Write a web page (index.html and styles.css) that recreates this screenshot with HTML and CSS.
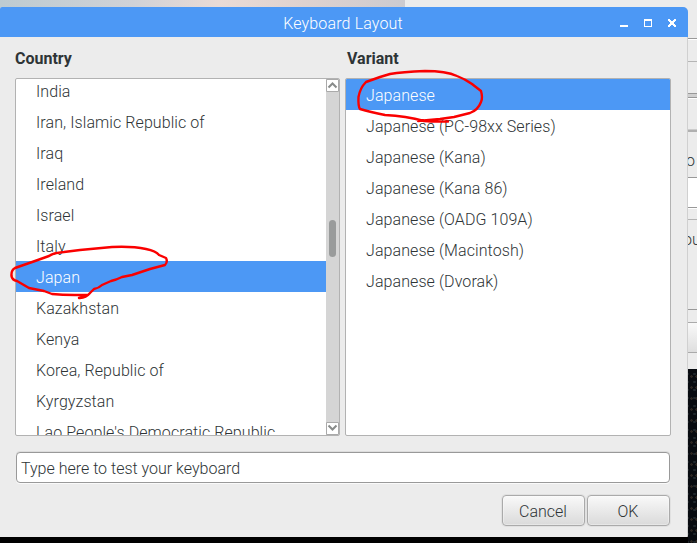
FILE: index.html
```html
<!DOCTYPE html>
<html lang="en">
<head>
<meta charset="utf-8">
<title>Keyboard Layout</title>
<link rel="stylesheet" href="styles.css">
</head>
<body>
<div class="desktop">
  <div class="sky"></div>
  <div class="back-window">
    <div class="back-top"></div>
    <div class="back-tabs"></div>
    <div class="back-panel"></div>
    <div class="back-slider"></div>
    <div class="back-gap"></div>
    <div class="back-label">o</div>
    <div class="back-entry"></div>
    <div class="back-space"></div>
    <div class="back-frame">ou</div>
    <div class="back-button"></div>
  </div>
  <div class="dialog">
    <header class="titlebar">
      <h1>Keyboard Layout</h1>
      <svg class="controls" width="56" height="10" viewBox="0 0 56 10" shape-rendering="crispEdges">
        <path d="M0 6h8v2H0z" fill="#fff"/>
        <path d="M24 0h8v8h-8zM25 2v5h6V2z" fill="#fff" fill-rule="evenodd"/>
        <path d="M48 0h2v1h1v1h2V1h1V0h2v2h-1v1h-1v2h1v1h1v2h-2V7h-1V6h-2v1h-1v1h-2V6h1V5h1V3h-1V2h-1z" fill="#fff"/>
      </svg>
    </header>
    <main class="content">
      <div class="columns">
        <section class="column">
          <h2>Country</h2>
          <div class="list">
            <ul class="rows scrolled">
              <li>India</li>
              <li>Iran, Islamic Republic of</li>
              <li>Iraq</li>
              <li>Ireland</li>
              <li>Israel</li>
              <li>Italy</li>
              <li class="selected">Japan</li>
              <li>Kazakhstan</li>
              <li>Kenya</li>
              <li>Korea, Republic of</li>
              <li>Kyrgyzstan</li>
              <li>Lao People's Democratic Republic</li>
            </ul>
            <div class="scrollbar">
              <svg class="arrow" width="13" height="13" viewBox="0 0 13 13"><path d="M.5.5h12v12H.5z" fill="#fff" stroke="#aaa"/><path d="M2.5 8.5l4-4 4 4" fill="none" stroke="#888b8a" stroke-width="2"/></svg>
              <div class="trough"><div class="thumb"></div></div>
              <svg class="arrow" width="13" height="13" viewBox="0 0 13 13"><path d="M.5.5h12v12H.5z" fill="#fff" stroke="#aaa"/><path d="M2.5 3.5l4 4 4-4" fill="none" stroke="#888b8a" stroke-width="2"/></svg>
            </div>
          </div>
        </section>
        <section class="column">
          <h2 class="inset">Variant</h2>
          <div class="list">
            <ul class="rows">
              <li class="selected">Japanese</li>
              <li>Japanese (PC-98xx Series)</li>
              <li>Japanese (Kana)</li>
              <li>Japanese (Kana 86)</li>
              <li>Japanese (OADG 109A)</li>
              <li>Japanese (Macintosh)</li>
              <li>Japanese (Dvorak)</li>
            </ul>
          </div>
        </section>
      </div>
      <div class="entry">Type here to test your keyboard</div>
      <div class="actions">
        <button type="button">Cancel</button>
        <button type="button">OK</button>
      </div>
    </main>
  </div>
  <svg class="marks" width="697" height="543" viewBox="0 0 697 543">
    <path d="M83 297L79 298M80 298Q86 298 90 293L94 289Q99 288 102 285L111 281Q116 280 122 277L132 275L150 269L165 265Q168 262 166 258L159 255Q156 251 146 249Q132 246 112 247L80 250L64 252Q53 253 49 256L35 261L15 268Q11 270 11.500 276Q12 280 17 281L29 288L44 291L52 294Q62 295 75 295L88 295"/>
    <path d="M448 121.500Q435 122 424 121Q406 116 385 115Q370 112 360 109Q358 106 358.500 97Q360 88 366 82L380 77L390 74Q402 72 425 71Q446 71 457 76Q465 79 472 84L481 91Q483 98 481 102Q478 110 470 113L454 117L440 119L418 121"/>
  </svg>
</div>
</body>
</html>
```
FILE: styles.css
```css
* { box-sizing: border-box; }

body {
  margin: 0;
  font-family: Roboto, "Liberation Sans", sans-serif;
  font-size: 16px;
  font-weight: 300;
  color: #2e3436;
}

.desktop {
  position: relative;
  width: 697px;
  height: 543px;
  overflow: hidden;
  background: #000;
}

.sky {
  position: absolute;
  left: 0;
  top: 0;
  width: 405px;
  height: 12px;
  background: linear-gradient(90deg, #bdcbd1, #d0d2d7 33%, #eadbd6 54%, #dfd2cf 75%, #cccbd0);
}

.back-window {
  position: absolute;
  left: 405px;
  top: 0;
  width: 292px;
  height: 369px;
  background: #ececec;
  line-height: 30px;
}
.back-window > div { padding-left: 281px; overflow: hidden; white-space: nowrap; }
.back-top { height: 38px; }
.back-tabs { height: 24px; border-top: 1px solid #999; border-bottom: 1px solid #b5b5b5; box-shadow: inset 0 1px #fff; }
.back-panel { height: 31px; }
.back-slider { height: 5px; background: #d0d0d0; border: solid #999; border-width: 1px 0; }
.back-gap { height: 34px; border-top: 1px solid #fff; border-bottom: 2px solid #b0b0b0; box-shadow: inset 0 -1px #ccc; }
.back-label { height: 45px; line-height: 58px; }
.back-entry { height: 31px; background: #fff; border: solid #999; border-width: 1px 0; }
.back-space { height: 11px; border-top: 1px solid #fff; }
.back-window .back-frame { height: 91px; padding-left: 278px; border-top: 1px solid #b5b5b5; border-bottom: 1px solid #999; line-height: 40px; }
.back-button { height: 31px; margin-top: 12px; border: solid #aaa; border-width: 1px 0; background: linear-gradient(#f9f9f9, #dedede); }

.desktop::before {
  content: "";
  position: absolute;
  right: 0;
  bottom: 0;
  width: 9px;
  height: 174px;
  background:
    radial-gradient(circle, #2b2521 0 1px, transparent 1.500px) 1px 2px / 5px 11px,
    radial-gradient(circle, #20272c 0 1px, transparent 1.500px) 3px 1px / 7px 8px,
    #080b10;
}

.dialog {
  position: absolute;
  left: 0;
  top: 7px;
  width: 688px;
  height: 530px;
  background: #ececec;
  border-right: 1px solid #d0d0d0;
  border-radius: 2px 5px 1px 0;
}

.titlebar {
  display: flex;
  align-items: center;
  justify-content: center;
  position: relative;
  width: 688px;
  height: 30px;
  background: #4c98f5;
  border-radius: 2px 5px 0 0;
  color: #fff;
}
h1 { margin: 3px 0 0 -2px; font-size: 16px; font-weight: 300; line-height: 20px; letter-spacing: .14px; }
.controls { position: absolute; left: 620px; top: 12px; }

.content { padding: 10px 16px 0 15px; }
.columns { display: grid; grid-template-columns: 325px 326px; gap: 5px; }
h2 { margin: 0 0 7px; font-size: 16px; line-height: 24px; font-weight: 700; }
.inset { padding-left: 2px; }

.list {
  display: flex;
  height: 358px;
  background: #fff;
  border: 1px solid #b2b2b2;
  border-radius: 2px;
  overflow: hidden;
}
.rows { flex: 1; min-width: 0; margin: 0; padding: 0; list-style: none; letter-spacing: .08px; }
.scrolled { margin-top: -4px; }
.rows li { height: 31px; padding-left: 20px; line-height: 33px; white-space: nowrap; }
.rows .selected { background: #4c98f5; color: #fff; }

.scrollbar { display: flex; flex-direction: column; width: 13px; background: #d5d5d5; }
.arrow { display: block; flex: none; }
.trough { flex: 1; padding: 128px 3px 0; }
.thumb { width: 7px; height: 37px; border-radius: 4px; background: #999b9b; }

.entry {
  width: 654px;
  height: 31px;
  margin: 16px 0 0 1px;
  padding-left: 4px;
  background: #fff;
  border: 1px solid #999;
  border-radius: 4px;
  box-shadow: 0 1px #fafafa, 0 -1px #ddd;
  line-height: 31px;
}

.actions { display: flex; justify-content: flex-end; gap: 2px; margin: 12px 1px 0 0; }
button {
  width: 83px;
  height: 31px;
  padding: 1px 1px 0 0;
  border: 1px solid #aaa;
  border-radius: 4px;
  background: linear-gradient(#f9f9f9, #dadada);
  box-shadow: inset 0 0 0 1px #ffffff55, 0 0 0 1px #e1e1e1;
  color: inherit;
  font: inherit;
}

.marks { position: absolute; left: 0; top: 0; }
.marks path { fill: none; stroke: #fa0000; stroke-width: 2.400; stroke-linecap: round; stroke-linejoin: round; }
```
